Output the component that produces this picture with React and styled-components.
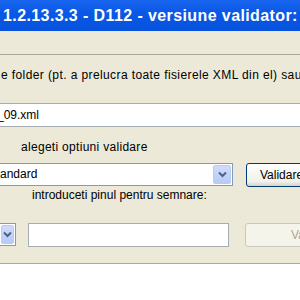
import React from "react";
import styled, { createGlobalStyle } from "styled-components";

const GlobalStyle = createGlobalStyle`
  html, body {
    margin: 0;
    padding: 0;
    background: #ffffff;
    overflow: hidden;
  }
  body {
    font-family: "Liberation Sans", Tahoma, sans-serif;
  }
`;

const Window = styled.div`
  width: 300px;
  height: 300px;
  overflow: hidden;
  background: #ffffff;
`;

const TitleBar = styled.div`
  height: 31px;
  background: linear-gradient(#1a66f0, #0a58e6 40%, #0652dc);
  color: #ffffff;
  font-family: "Liberation Sans", "Trebuchet MS", sans-serif;
  font-weight: bold;
  font-size: 16px;
  letter-spacing: 0.4px;
  line-height: 31px;
  padding-left: 3px;
  white-space: nowrap;
`;

const MenuBand = styled.div`
  height: 23px;
  background: #ece9d8;
  border-bottom: 1px solid #aca899;
  box-shadow: 0 1px 0 #ffffff;
`;

const Body = styled.div`
  background: #ece9d8;
  height: 207px;
  padding-top: 1px;
  border-bottom: 1px solid #aca899;
  display: flex;
  flex-direction: column;
  white-space: nowrap;
`;

const Label = styled.div`
  font-size: 12px;
  color: #000;
  height: 14px;
  line-height: 14px;
  letter-spacing: ${(p) => p.$spacing || 0}px;
  padding-left: ${(p) => p.$indent}px;
  margin-top: ${(p) => p.$top}px;
`;

const Row = styled.div`
  display: flex;
  align-items: flex-start;
  margin-top: ${(p) => p.$top}px;
`;

const TextInput = styled.div`
  box-sizing: border-box;
  flex-shrink: 0;
  height: 24px;
  width: ${(p) => p.$width}px;
  margin-left: ${(p) => p.$left}px;
  background: #fff;
  border: 1px solid #a5acb2;
  border-left-width: ${(p) => (p.$open ? 0 : 1)}px;
  font-size: 12px;
  line-height: 22px;
  text-indent: ${(p) => p.$indent || 0}px;
  color: #000;
`;

const Select = styled.div`
  box-sizing: border-box;
  flex-shrink: 0;
  height: 23px;
  width: ${(p) => p.$width}px;
  background: #fff;
  border: 1px solid #7f9db9;
  border-left: none;
  display: flex;
  align-items: stretch;
  font-size: 12px;
  line-height: 21px;
`;

const SelectText = styled.div`
  flex: 1;
`;

const DropButton = styled.div`
  width: 18px;
  margin: 1px;
  border-radius: 2px;
  background: linear-gradient(#cfdcfb, #b6cbf6);
  border: 1px solid #b9cbf3;
  box-sizing: border-box;
  display: flex;
  align-items: center;
  justify-content: center;
`;

const Button = styled.div`
  box-sizing: border-box;
  height: 24px;
  flex: 1;
  min-width: 0;
  margin-left: ${(p) => p.$left}px;
  margin-right: -20px;
  border: 1px solid ${(p) => (p.$disabled ? "#cac8bb" : "#003c74")};
  border-radius: 3px;
  background: ${(p) =>
    p.$disabled ? "#f5f4ea" : "linear-gradient(#ffffff, #f1f0ea 80%, #d8d4c4)"};
  color: ${(p) => (p.$disabled ? "#aca899" : "#000")};
  font-size: 12px;
  line-height: 22px;
  padding-left: ${(p) => p.$pad}px;
`;

const Arrow = () => (
  <svg width="9" height="7" viewBox="0 0 9 7">
    <path d="M1 1.5 L4.5 5 L8 1.5" fill="none" stroke="#4d6185" strokeWidth="2" />
  </svg>
);

export default function App() {
  return (
    <>
      <GlobalStyle />
      <Window>
        <TitleBar>1.2.13.3.3 - D112 - versiune validator:</TitleBar>
        <MenuBand />
        <Body>
          <Label $indent={1} $top={12} $spacing={0.4}>
            e folder (pt. a prelucra toate fisierele XML din el) sau
          </Label>
          <Row $top={21}>
            <TextInput $width={320} $left={0} $open $indent={-3}>
              _09.xml
            </TextInput>
          </Row>
          <Label $indent={21} $top={13} $spacing={0.3}>
            alegeti optiuni validare
          </Label>
          <Row $top={9}>
            <Select $width={233}>
              <SelectText>andard</SelectText>
              <DropButton>
                <Arrow />
              </DropButton>
            </Select>
            <Button $left={13} $pad={13}>
              Validare
            </Button>
          </Row>
          <Label $indent={32} $top={1}>
            introduceti pinul pentru semnare:
          </Label>
          <Row $top={21}>
            <Select $width={16}>
              <DropButton>
                <Arrow />
              </DropButton>
            </Select>
            <TextInput $width={201} $left={12} />
            <Button $left={16} $disabled $pad={45}>
              Validare
            </Button>
          </Row>
        </Body>
      </Window>
    </>
  );
}
